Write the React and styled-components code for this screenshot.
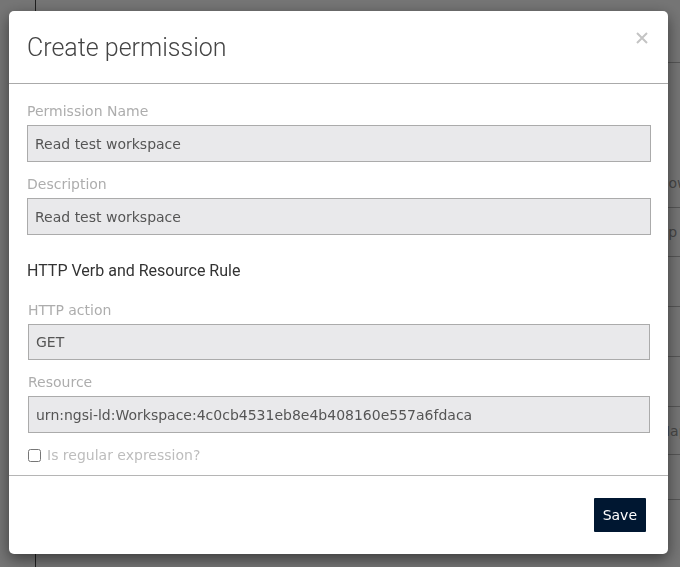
import React from "react";
import styled, { createGlobalStyle } from "styled-components";

const GlobalStyle = createGlobalStyle`
  html, body {
    margin: 0;
    padding: 0;
    height: 100%;
    overflow: hidden;
  }
  body {
    font-family: "DejaVu Sans", Verdana, sans-serif;
    background: #fff;
  }
  * {
    box-sizing: border-box;
  }
`;

/* page behind the dialog */
const Page = styled.div`
  display: flex;
  height: 567px;
  background: #fff;
`;

const Sidebar = styled.div`
  flex: none;
  width: 36px;
  border-right: 1px solid #444;
`;

const Main = styled.div`
  flex: 1;
  display: flex;
  flex-direction: column;
`;

const TopBar = styled.div`
  flex: none;
  height: 63px;
  border-bottom: 1px solid #bbb;
  margin-bottom: 95px;
`;

const Row = styled.div`
  flex: none;
  display: flex;
  align-items: center;
  height: ${(p) => p.h || 50}px;
  border-bottom: 1px solid #bbb;
  color: #999;
  font-size: 14px;
`;

const Cell = styled.div`
  flex: ${(p) => (p.wide ? "0 0 622px" : "1")};
  white-space: nowrap;
`;

/* dialog */
const Overlay = styled.div`
  position: fixed;
  inset: 0;
  background: rgba(0, 0, 0, 0.54);
  padding: 11px 0 0 9px;
`;

const Modal = styled.div`
  width: 659px;
  background: #fff;
  border-radius: 5px;
  box-shadow: 0 5px 15px rgba(0, 0, 0, 0.5);
  display: flex;
  flex-direction: column;
`;

const Header = styled.div`
  height: 73px;
  display: flex;
  justify-content: space-between;
  align-items: center;
  padding: 0 20px 0 18px;
  border-bottom: 1px solid #aaa;
`;

const Title = styled.h4`
  margin: 0;
  font-family: Roboto, "Open Sans", sans-serif;
  font-weight: 300;
  font-size: 25px;
  color: #444;
`;

const Close = styled.button`
  align-self: flex-start;
  margin-top: 21px;
  padding: 0;
  border: none;
  background: none;
  display: flex;
  cursor: pointer;
`;

const Body = styled.div`
  display: flex;
  flex-direction: column;
  padding: 17px 17px 10px 18px;
`;

const Field = styled.div`
  margin-bottom: 12px;
`;

const Label = styled.label`
  display: block;
  font-size: 14px;
  line-height: 20px;
  color: #adadad;
  margin-bottom: 4px;
`;

const Input = styled.input`
  display: block;
  width: 100%;
  height: ${(p) => p.h || 37}px;
  margin: 0;
  padding: 0 7px;
  border: 1px solid #ababab;
  border-radius: 0;
  background: #e9e9eb;
  font-family: "DejaVu Sans", Verdana, sans-serif;
  font-size: 14px;
  color: #555;
  outline: none;
`;

const SectionTitle = styled.h5`
  margin: 13px 0 18px;
  font-family: Roboto, "Open Sans", sans-serif;
  font-weight: 400;
  font-size: 16px;
  line-height: 22px;
  color: #333;
`;

const Rule = styled.div`
  display: flex;
  flex-direction: column;
  padding: 0 1px;
`;

const CheckRow = styled.label`
  display: flex;
  align-items: center;
  font-size: 14px;
  line-height: 20px;
  color: #bdbdbd;

  input {
    width: 13px;
    height: 13px;
    margin: 0 6px 0 0;
  }
`;

const Footer = styled.div`
  display: flex;
  justify-content: flex-end;
  padding: 22px;
  border-top: 1px solid #b5b5b5;
`;

const SaveButton = styled.button`
  height: 34px;
  padding: 0 9px;
  border: none;
  border-radius: 1px;
  background: #001731;
  color: #fff;
  font-family: "DejaVu Sans", Verdana, sans-serif;
  font-size: 14px;
  cursor: pointer;
`;

const bgRows = [
  { text: "Now", h: 50 },
  { text: "Up", h: 49 },
  { text: "", h: 50 },
  { text: "", h: 50 },
  { text: "", h: 50 },
  { text: "Map", h: 48 },
  { text: "", h: 45 },
];

const App = () => {
  return (
    <>
      <GlobalStyle />
      <Page>
        <Sidebar />
        <Main>
          <TopBar />
          {bgRows.map((r, i) => (
            <Row key={i} h={r.h}>
              <Cell wide />
              <Cell>{r.text}</Cell>
            </Row>
          ))}
        </Main>
      </Page>

      <Overlay>
        <Modal>
          <Header>
            <Title>Create permission</Title>
            <Close aria-label="Close">
              <svg width="12" height="12" viewBox="0 0 12 12">
                <path d="M1 1L11 11M11 1L1 11" stroke="#c4c4c4" strokeWidth="2" />
              </svg>
            </Close>
          </Header>

          <Body>
            <Field>
              <Label>Permission Name</Label>
              <Input defaultValue="Read test workspace" readOnly />
            </Field>
            <Field>
              <Label>Description</Label>
              <Input defaultValue="Read test workspace" readOnly />
            </Field>

            <SectionTitle>HTTP Verb and Resource Rule</SectionTitle>

            <Rule>
              <Field>
                <Label>HTTP action</Label>
                <Input h={36} defaultValue="GET" readOnly />
              </Field>
              <Field>
                <Label>Resource</Label>
                <Input
                  defaultValue="urn:ngsi-ld:Workspace:4c0cb4531eb8e4b408160e557a6fdaca"
                  readOnly
                />
              </Field>
              <CheckRow>
                <input type="checkbox" />
                Is regular expression?
              </CheckRow>
            </Rule>
          </Body>

          <Footer>
            <SaveButton>Save</SaveButton>
          </Footer>
        </Modal>
      </Overlay>
    </>
  );
};

export default App;
